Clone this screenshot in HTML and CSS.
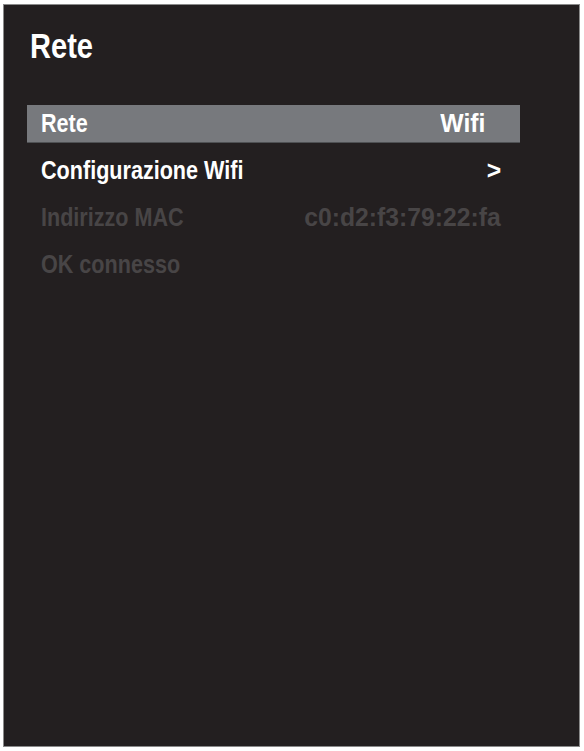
FILE: index.html
```html
<!DOCTYPE html>
<html lang="it">
<head>
<meta charset="utf-8">
<title>Rete</title>
<link rel="stylesheet" href="styles.css">
</head>
<body>
<div class="screen">
  <h1 class="title"><span class="narrow">Rete</span></h1>
  <ul class="menu">
    <li class="row row--selected row--wifi"><span class="label narrow">Rete</span><span class="value narrow">Wifi</span></li>
    <li class="row"><span class="label narrow">Configurazione Wifi</span><span class="value narrow">&gt;</span></li>
    <li class="row row--disabled"><span class="label narrow">Indirizzo MAC</span><span class="value narrow">c0:d2:f3:79:22:fa</span></li>
    <li class="row row--disabled"><span class="label narrow">OK connesso</span></li>
  </ul>
</div>
</body>
</html>
```

FILE: styles.css
```css
html, body {
  margin: 0;
  padding: 0;
  background: #ffffff;
}

body {
  width: 584px;
  height: 751px;
  padding: 5px 5px 5px 4px;
  box-sizing: border-box;
  font-family: "Liberation Sans", Arial, sans-serif;
  font-weight: bold;
}

.screen {
  height: 741px;
  background: #231f20;
  box-shadow: 0 0 0 1px #8a8a8a;
  padding: 21px 0 0 0;
  box-sizing: border-box;
}

.narrow {
  display: inline-block;
  transform: scaleX(0.83);
  white-space: nowrap;
}

.title {
  margin: 0 0 0 26px;
  font-size: 35px;
  line-height: 40px;
  color: #ffffff;
  font-weight: bold;
}

.title .narrow,
.label {
  transform-origin: left center;
}

.value {
  transform: scaleX(0.95);
  transform-origin: right center;
}

.menu {
  list-style: none;
  margin: 39px 0 0 23px;
  padding: 0;
  width: 493px;
  display: flex;
  flex-direction: column;
  gap: 10px;
}

.row {
  height: 37px;
  display: flex;
  align-items: center;
  justify-content: space-between;
  padding: 0 19px 0 14px;
  box-sizing: border-box;
  font-size: 26px;
  color: #ffffff;
}

.row--selected {
  background: #77797d;
  box-shadow: 0 1px 0 #4f5154;
}

.row--wifi {
  padding-right: 35px;
}

.row--disabled {
  color: #484546;
}
```
